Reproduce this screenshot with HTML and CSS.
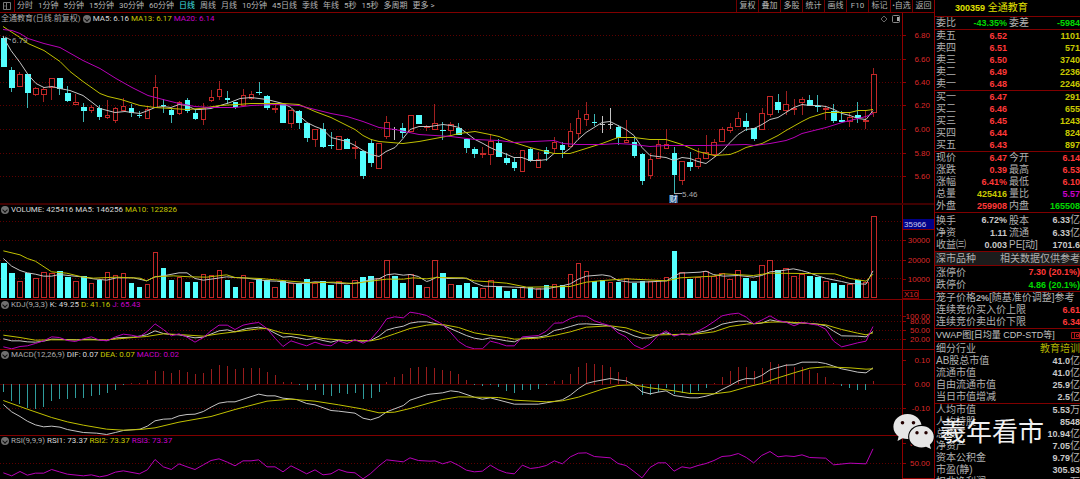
FILE: index.html
```html
<!DOCTYPE html>
<html lang="zh-CN">
<head>
<meta charset="utf-8">
<title>全通教育 300359</title>
<link rel="stylesheet" href="styles.css">
</head>
<body>
<div class="app">
  <main class="charts">
    <nav class="toolbar">
      <button class="layout-btn" aria-label="布局"><svg width="8" height="8" viewBox="0 0 8 8"><path d="M.5.5h7v7h-7zM3.5.5v7" fill="none" stroke="#777"/><path d="M1.500 4h1" stroke="#999"/></svg></button>
      <div class="periods">
        <button>分时</button><button>1分钟</button><button>5分钟</button><button>15分钟</button><button>30分钟</button><button>60分钟</button><button class="active">日线</button><button>周线</button><button>月线</button><button>10分钟</button><button>45日线</button><button>季线</button><button>年线</button><button>5秒</button><button>15秒</button><button>多周期</button><button>更多 &gt;</button>
      </div>
      <div class="tools">
        <button>复权</button><button>叠加</button><button>多股</button><button>统计</button><button>画线</button><button>F10</button><button>标记</button><button>•自选</button><button>返回</button>
      </div>
    </nav>

    <section class="panel price">
      <svg class="plot" data-panel="price"></svg>
      <div class="legend">
        <span class="muted">全通教育(日线.前复权)</span><i class="dot"></i>
        <span class="white">MA5: 6.16</span><span class="yellow">MA13: 6.17</span><span class="magenta">MA20: 6.14</span>
        <span class="corner">
          <svg width="8" height="8" viewBox="0 0 8 8"><path d="M4 1l3 3-3 3-3-3z" fill="none" stroke="#666"/></svg>
          <svg width="8" height="8" viewBox="0 0 8 8"><rect x=".5" y=".5" width="7" height="7" rx="1" fill="none" stroke="#888"/><path d="M5 2h2v4H5z" fill="#aaa"/></svg>
        </span>
      </div>
    </section>
    <section class="panel volume">
      <svg class="plot" data-panel="volume"></svg>
      <div class="legend"><i class="dot"></i><span class="white">VOLUME: 425416</span><span class="white">MA5: 146256</span><span class="yellow">MA10: 122826</span></div>
    </section>
    <section class="panel kdj">
      <svg class="plot" data-panel="kdj"></svg>
      <div class="legend"><i class="dot"></i><span class="muted">KDJ(9,3,3)</span><span class="white">K: 49.25</span><span class="yellow">D: 41.16</span><span class="magenta">J: 65.43</span></div>
    </section>
    <section class="panel macd">
      <svg class="plot" data-panel="macd"></svg>
      <div class="legend"><i class="dot"></i><span class="muted">MACD(12,26,9)</span><span class="white">DIF: 0.07</span><span class="yellow">DEA: 0.07</span><span class="magenta">MACD: 0.02</span></div>
    </section>
    <section class="panel rsi">
      <svg class="plot" data-panel="rsi"></svg>
      <div class="legend"><i class="dot"></i><span class="muted">RSI(9,9,9)</span><span class="white">RSI1: 73.37</span><span class="yellow">RSI2: 73.37</span><span class="magenta">RSI3: 73.37</span></div>
    </section>
  </main>

  <aside class="quote">
    <h1><b>300359</b> 全通教育</h1>
    <table class="four">
      <tr><th>委比</th><td class="green">-43.35%</td><th>委差</th><td class="green">-5984</td></tr>
    </table>
    <table class="book">
      <tr><th>卖五</th><td class="red">6.52</td><td class="yellow">1101</td></tr>
      <tr><th>卖四</th><td class="red">6.51</td><td class="yellow">571</td></tr>
      <tr><th>卖三</th><td class="red">6.50</td><td class="yellow">3740</td></tr>
      <tr><th>卖二</th><td class="red">6.49</td><td class="yellow">2236</td></tr>
      <tr><th>卖一</th><td class="red">6.48</td><td class="yellow">2246</td></tr>
    </table>
    <table class="book">
      <tr><th>买一</th><td class="red">6.47</td><td class="yellow">291</td></tr>
      <tr><th>买二</th><td class="red">6.46</td><td class="yellow">655</td></tr>
      <tr><th>买三</th><td class="red">6.45</td><td class="yellow">1243</td></tr>
      <tr><th>买四</th><td class="red">6.44</td><td class="yellow">824</td></tr>
      <tr><th>买五</th><td class="red">6.43</td><td class="yellow">897</td></tr>
    </table>
    <table class="four">
      <tr><th>现价</th><td class="red">6.47</td><th>今开</th><td class="red">6.14</td></tr>
      <tr><th>涨跌</th><td class="red">0.39</td><th>最高</th><td class="red">6.53</td></tr>
      <tr><th>涨幅</th><td class="red">6.41%</td><th>最低</th><td class="red">6.10</td></tr>
      <tr><th>总量</th><td class="yellow">425416</td><th>量比</th><td class="magenta">5.57</td></tr>
      <tr><th>外盘</th><td class="red">259908</td><th>内盘</th><td class="green">165508</td></tr>
    </table>
    <table class="four roomy">
      <tr><th>换手</th><td>6.72%</td><th>股本</th><td>6.33<i>亿</i></td></tr>
      <tr><th>净资</th><td>1.11</td><th>流通</th><td>6.33<i>亿</i></td></tr>
      <tr><th>收益㈢</th><td>0.003</td><th>PE[动]</th><td>1701.6</td></tr>
    </table>
    <div class="strip shaded"><span>深市品种</span><span>相关数据仅供参考</span></div>
    <table class="two limits roomy">
      <tr><th>涨停价</th><td class="red">7.30 (20.1%)</td></tr>
      <tr><th>跌停价</th><td class="green">4.86 (20.1%)</td></tr>
    </table>
    <table class="two">
      <tr><th colspan="2">笼子价格<b>2%</b>[随基准价调整]参考</th></tr>
      <tr><th>连续竞价买入价上限</th><td class="red">6.61</td></tr>
      <tr><th>连续竞价卖出价下限</th><td class="red">6.34</td></tr>
    </table>
    <div class="strip"><span class="vwap">VWAP图[日均量 CDP-STD等]</span><svg width="9" height="8" viewBox="0 0 9 8"><path d="M.5 1.5h8v6h-8zM3.5 1.5v6M5.5 3.5h2v2h-2z" fill="none" stroke="#b01818"/></svg></div>
    <table class="two roomy">
      <tr><th>细分行业</th><td class="industry">教育培训</td></tr>
      <tr><th>AB股总市值</th><td>41.0<i>亿</i></td></tr>
      <tr><th>流通市值</th><td>41.0<i>亿</i></td></tr>
      <tr><th>自由流通市值</th><td>25.9<i>亿</i></td></tr>
      <tr><th>当日市值增减</th><td>2.5<i>亿</i></td></tr>
    </table>
    <table class="two last">
      <tr><th>人均市值</th><td>5.53<i>万</i></td></tr>
      <tr><th>人均持股</th><td>8548</td></tr>
      <tr><th>总资产</th><td>10.94<i>亿</i></td></tr>
      <tr><th>净资产</th><td>7.05<i>亿</i></td></tr>
      <tr><th>资本公积金</th><td>9.79<i>亿</i></td></tr>
      <tr><th>市盈(静)</th><td>305.93</td></tr>
      <tr><th>扣非净利润</th><td>174.5<i>万</i></td></tr>
    </table>
  </aside>

  <div class="watermark">
    <svg width="42" height="36" viewBox="0 0 42 36">
      <path d="M14.500 0C6.500 0 .4 5.600.4 12.800c0 4 2 7.400 5.200 9.800L4.500 27l5-2.700c1.600.5 3.300.8 5 .8 8 0 14.200-5.500 14.200-12.300S22.500 0 14.500 0z" fill="#e6e6e6"/>
      <ellipse cx="28.500" cy="22.800" rx="13.400" ry="12" fill="#000"/>
      <path d="M28.500 12c-7 0-12.300 4.800-12.300 10.800S21.500 33.500 28.500 33.500c1.600 0 3.100-.3 4.500-.8l5 2.300-1.200-4.300c2.500-2 4-4.800 4-8C40.800 16.800 35.500 12 28.500 12z" fill="#e6e6e6"/>
      <circle cx="9.500" cy="8.800" r="1.800" fill="#200"/><circle cx="20.500" cy="8.800" r="1.800" fill="#200"/>
      <circle cx="24" cy="18.800" r="1.700" fill="#200"/><circle cx="33" cy="18.800" r="1.700" fill="#200"/>
    </svg>
    <span>羲年看市</span>
  </div>
</div>
<script src="chart.js"></script>
</body>
</html>
```

FILE: styles.css
```css
* { box-sizing: border-box; }
body {
  margin: 0;
  background: #000;
  color: #c8c8c8;
  font: 8px/10px "Liberation Sans", "Noto Sans CJK SC", sans-serif;
  overflow: hidden;
}
button {
  margin: 0;
  padding: 0;
  border: 0;
  background: none;
  color: #b4b4b4;
  font: inherit;
  white-space: nowrap;
}
.red { color: #ff3838; }
.green { color: #00d800; }
.yellow { color: #c8c800; }
.magenta { color: #c800c8; }
.white { color: #d8d8d8; }
.muted { color: #acacac; }

.app { position: relative; display: flex; height: 100vh; }
.charts {
  flex: 1;
  min-width: 0;
  display: grid;
  grid-template-rows: 13px minmax(0, 192fr) minmax(0, 95fr) minmax(0, 50fr) minmax(0, 86fr) minmax(0, 43fr);
}

.toolbar { display: flex; align-items: stretch; border-bottom: 1px solid #800000; font-family: Roboto, "Noto Sans CJK SC", sans-serif; }
.layout-btn { display: flex; align-items: center; width: 15px; padding-left: 3px; border-right: 1px solid #800000; }
.periods { display: flex; gap: 5px; padding-left: 2px; }
.periods .active { color: #40e0e0; }
.tools { display: flex; margin-left: auto; }
.tools button { min-width: 22px; padding: 0 1px; border-left: 1px solid #700000; text-align: center; }

.panel { display: grid; grid-template: minmax(0, 1fr) / minmax(0, 1fr); border-bottom: 1px solid #800000; }
.panel.price { border-bottom: 2px solid #400000; }
.panel.rsi { border-bottom: 0; }
.panel > * { grid-area: 1 / 1; }
.plot { display: block; width: 100%; height: 100%; min-height: 0; }
.plot text { font: 8px "Liberation Sans", "Noto Sans CJK SC", sans-serif; }
.legend { align-self: start; display: flex; align-items: center; gap: 2px; padding: 0 34px 0 1px; font-family: Roboto, "Noto Sans CJK SC", sans-serif; white-space: nowrap; }
.price .legend { padding-top: 1px; }
.corner { display: flex; gap: 4px; margin-left: auto; }
.dot { width: 8px; height: 8px; border-radius: 50%; background: #707070; display: grid; place-items: center; }
.dot::after { content: ""; width: 3px; height: 3px; border: solid #111; border-width: 0 1px 1px 0; transform: rotate(45deg); }

.quote { flex: 0 0 146px; border-left: 1px solid #900000; overflow: hidden; font-size: 10px; line-height: 12px; }
.quote h1 { margin: 0; height: 16px; line-height: 16px; padding-left: 20px; color: #e0e000; font-size: 10px; font-weight: 400; }
.quote h1 b { font-size: 9px; }
.quote table { width: 100%; border-collapse: collapse; table-layout: fixed; border-top: 1px solid #800000; }
.quote tr { height: 12px; }
.quote th, .quote td { padding: 0; height: 12px; line-height: 12px; white-space: nowrap; }
.quote th { padding-left: 1px; text-align: left; font-weight: 400; color: #b0b0b0; }
.quote th b { font-size: 9px; }
.quote td { text-align: right; font-size: 9px; font-weight: 700; }
.quote td i { font-size: 10px; font-style: normal; font-weight: 400; color: #b0b0b0; }
.quote td.industry { font-size: 10px; font-weight: 400; color: #b0b000; }
.quote .four th { width: 30px; }
.quote .four th:nth-child(3) { padding-left: 2px; }
.quote .four td:nth-child(2) { width: 42px; }
.quote .book th { width: 30px; }
.quote .book td:nth-child(2) { width: 42px; }
.quote .two th { width: 96px; }
.quote .limits th { width: 60px; }
.quote .roomy tr:first-child > * { height: 13px; line-height: 13px; }
.strip { display: flex; justify-content: space-between; align-items: center; height: 13px; padding-left: 1px; border-top: 1px solid #800000; color: #b0b0b0; white-space: nowrap; }
.strip.shaded { height: 14px; background: #1c1c1c; }
.vwap { font-size: 9px; color: #c4c4c4; }

.watermark { position: absolute; right: 36px; bottom: 29px; display: flex; align-items: center; gap: 5px; color: #f0f0f0; font-size: 26px; line-height: 36px; }
```

FILE: chart.js
```js
// Candles: kind, high, top, bottom, low. r = up, c = down, w/x = flat on down/up volume.
const CANDLES = `c 36 38 67 67|c 67 70 88 92|r 72 74 87 87|c 74 74 93 108|r 87 88 95 96|r 87 89 95 102|r 78 78 88 100|c 78 78 89 95|c 86 93 101 102|r 94 102 105 105
c 103 107 111 122|r 105 107 111 113|c 105 108 117 120|r 100 115 118 119|r 107 108 121 123|r 98 106 111 111|c 104 108 113 117|c 111 115 116 118|r 107 109 119 119|r 75 87 108 108
c 99 105 106 113|c 109 110 115 123|r 101 102 114 115|c 98 100 111 113|c 110 113 119 120|r 103 108 120 125|r 90 97 101 102|r 81 89 97 100|c 91 98 100 104|c 102 102 107 109
r 89 95 106 106|r 91 94 99 100|c 82 92 93 95|c 95 96 108 110|r 105 108 110 113|c 103 104 123 123|r 109 110 124 128|c 110 111 123 129|c 123 123 138 142|r 129 129 140 147
c 123 129 147 148|c 132 145 146 149|r 136 136 150 150|c 138 139 149 149|r 141 147 149 159|c 151 151 176 179|c 139 143 163 167|r 143 143 169 169|r 116 122 137 139|w 127 129 129 140
c 123 128 133 138|r 115 115 132 132|c 115 115 124 124|r 125 126 128 131|r 104 123 130 130|c 122 130 131 140|r 122 124 131 135|c 123 128 135 135|c 139 139 148 153|c 147 149 154 158
r 147 153 155 158|r 134 141 155 165|c 139 143 157 157|c 153 158 163 165|c 158 162 168 171|r 150 150 172 172|c 148 149 161 162|r 152 159 168 168|c 147 150 154 161|r 137 142 149 153
c 142 145 150 158|r 123 131 147 147|r 110 118 134 140|r 102 114 120 126|c 114 122 123 126|w 116 124 124 133|x 108 124 124 129|c 125 127 138 145|r 120 140 143 143|c 136 142 156 158
c 153 154 181 185|r 153 159 176 179|r 140 144 159 159|r 129 144 149 149|c 147 153 175 193|r 161 161 181 185|c 152 162 167 171|r 148 158 167 169|r 135 152 159 159|r 139 142 155 157
r 127 129 142 142|r 123 127 131 133|r 112 118 127 127|c 113 121 127 131|c 128 128 139 141|r 108 113 130 130|r 96 96 115 117|c 94 102 110 113|r 91 104 111 115|r 99 108 110 115
r 97 99 103 115|c 95 100 106 106|c 95 106 107 112|r 106 108 110 120|c 104 111 121 123|c 111 120 122 122|r 112 117 122 127|c 102 115 118 123|r 111 120 122 129|r 68 74 113 117`
  .split(/[|\n]/).map(s => { const p = s.trim().split(' '); return [p[0], ...p.slice(1).map(Number)]; });

// Bar tops and indicator lines, stored at three units per base pixel, y counted from 200px down.
const VOLUME = [190,219,244,220,235,217,220,214,231,244,228,250,240,217,225,220,249,262,252,157,205,239,232,247,247,223,226,209,239,260,226,247,237,239,260,244,250,249,237,250,243,256,244,256,241,232,228,234,179,229,249,223,255,262,181,220,253,255,250,262,265,241,258,273,267,262,262,265,254,253,256,223,190,214,243,239,247,245,235,249,243,244,240,232,153,217,237,232,214,229,218,238,209,234,243,196,181,210,205,229,223,229,232,244,249,255,253,240,247,48];
const HIST = [577,605,612,626,627,622,605,599,599,595,594,590,587,581,570,555,550,550,541,514,514,519,511,516,522,519,507,496,498,507,504,504,504,517,526,546,547,553,570,572,585,590,581,584,581,599,596,576,547,530,522,504,502,501,504,511,514,523,541,555,560,557,563,573,580,570,570,567,557,544,541,523,501,489,491,494,501,517,532,553,585,587,576,566,583,580,582,575,564,549,530,514,502,502,514,504,487,492,493,502,502,510,519,532,549,559,566,570,572,544];

const WHITE = '#c4c4c4', YELLOW = '#c0c000', MAGENTA = '#b800b8', CYAN = '#54ffff', RED = '#c42828', LABEL = '#dc2828';

const pairs = s => s.trim().split(/\s+/).map(p => p.split(',').map(Number));
// Two halves of a series; the second half starts at unit 1290.
const halves = (a, b) => [...pairs(a), ...pairs(b).map(([x, y]) => [x + 1290, y])].map(([x, y]) => [x / 3, y / 3 + 200]);

const PANELS = {
  price: {
    top: 13, height: 190,
    grid: [35, 59, 82, 105, 129, 153, 176],
    labels: [[35, '6.80'], [59, '6.60'], [82, '6.40'], [105, '6.20'], [129, '6.00'], [153, '5.80'], [176, '5.60']],
    lines: [
      [WHITE, pairs('3,36 11,50 20,62 28,74 36,83 44,87 52,86 60,88 70,90 83,95 91,101 100,108 115,112 125,111 132,112 140,113 148,110 155,107 163,106 171,107 179,104 187,105 195,109 200,109 211,108 217,106 230,102 240,98 251,97 267,99 275,101 283,103 291,107 299,115 307,122 315,126 323,129 331,137 339,139 347,141 355,145 363,150 371,154 379,156 386,151 395,147 403,138 410,129 419,126 430,126 443,124 451,125 459,127 466,132 475,139 483,143 490,147 499,151 507,154 514,157 522,157 530,160 539,160 547,159 554,153 563,153 570,148 578,139 586,132 594,127 602,122 610,121 618,125 626,129 634,135 642,147 650,155 658,156 666,157 674,160 682,157 690,158 698,161 706,163 714,157 722,151 730,142 738,134 746,129 754,128 762,124 770,119 778,117 786,112 794,107 802,104 810,105 818,105 826,106 834,109 842,113 850,115 858,118 866,119 873,110')],
      [YELLOW, pairs('3,26 20,37 28,43 44,50 60,61 70,71 83,81 100,93 108,96 121,99 140,105 155,107 171,108 187,109 200,108 220,105 237,104 251,103 283,103 299,104 315,111 331,117 347,125 355,129 363,135 371,139 379,141 403,143 419,141 435,138 451,135 459,133 475,131 490,134 499,136 514,142 530,147 554,153 570,153 586,148 602,143 618,137 634,137 650,139 666,139 682,144 698,151 714,155 730,154 738,151 746,147 762,143 778,135 786,130 802,121 810,117 826,112 850,112 858,110 866,110 873,109')],
      [MAGENTA, pairs('3,29 12,30 20,33 28,38 44,43 60,47 83,60 100,68 116,78 132,87 148,95 163,99 179,103 195,106 211,107 235,107 251,105 275,104 299,105 315,109 331,113 347,116 363,121 379,127 395,129 419,134 435,135 451,136 475,139 499,140 514,142 554,140 563,143 578,144 602,144 618,143 634,144 650,146 666,145 706,145 746,144 754,145 770,143 786,140 794,137 802,133 818,129 826,127 842,122 850,120 858,118 866,116 873,113')]
    ]
  },
  volume: {
    top: 205, height: 94,
    grid: [221, 240, 260, 278],
    labels: [[240, '30000'], [260, '20000'], [279, '10000']],
    lines: [
      [WHITE, halves('10,174 35,197 60,210 82,217 106,221 131,227 155,227 178,222 215,226 245,229 280,235 320,239 350,232 400,232 440,241 465,229 490,226 537,217 561,217 585,234 610,239 640,235 680,229 705,231 740,233 800,241 830,242 870,247 900,250 945,244 969,245 1040,250 1085,246 1112,236 1137,235 1160,223 1184,220 1210,224 1230,222 1255,228 1280,243', '0,240 20,230 50,234 110,233 133,247 160,257 200,258 253,260 290,262 320,266 350,265 400,255 421,250 445,236 469,227 517,223 541,227 564,240 600,245 660,244 710,241 732,227 750,218 810,215 828,212 850,222 880,227 925,225 970,230 995,225 1020,214 1044,212 1090,205 1114,210 1139,217 1163,226 1190,234 1235,243 1260,249 1308,251 1329,211')],
      [YELLOW, halves('10,151 60,163 82,174 106,182 155,214 200,218 245,229 280,233 350,230 420,233 440,241 465,229 520,226 570,229 620,230 680,223 705,231 780,234 870,242 930,247 1000,245 1060,249 1112,242 1160,236 1210,236 1240,232 1280,235', '20,231 100,232 133,241 180,244 230,248 290,260 420,258 469,245 520,240 590,235 710,241 750,232 850,227 880,220 970,225 1020,218 1214,220 1260,234 1308,242 1329,221')]
    ]
  },
  kdj: {
    top: 300, height: 49,
    grid: [315, 321, 330, 339],
    labels: [[316, '100.00'], [321, '80.00'], [330, '50.00'], [339, '20.00']],
    lines: [
      [WHITE, halves('10,415 35,421 60,421 82,424 106,425 131,422 155,416 230,418 270,416 320,420 350,412 400,410 440,403 465,391 490,399 514,402 537,403 585,412 610,410 657,391 682,388 705,394 740,384 776,380 801,385 825,398 849,410 873,408 920,417 945,414 969,420 993,425 1016,419 1040,421 1065,419 1085,422 1112,420 1137,407 1160,389 1184,382 1210,377 1230,368 1255,364 1280,364', '0,366 38,374 86,395 109,405 133,413 157,417 181,412 229,421 253,424 277,413 325,410 349,405 373,390 397,385 421,378 445,371 469,370 517,373 541,377 564,388 588,395 612,406 636,413 660,412 684,403 708,397 732,404 756,401 780,403 804,396 828,391 852,383 876,371 900,366 925,362 949,362 971,370 995,368 1020,358 1044,363 1068,365 1092,368 1116,367 1163,371 1187,376 1211,392 1235,406 1283,407 1308,409 1329,393')],
      [YELLOW, halves('10,404 60,411 106,419 155,418 230,418 320,418 400,411 440,408 465,404 490,400 537,402 610,407 657,400 705,394 776,385 801,384 849,398 900,403 969,414 1040,420 1112,421 1137,416 1184,400 1230,384 1280,374', '0,373 38,372 86,381 133,397 181,405 229,411 253,416 325,413 373,405 421,394 469,380 541,376 588,382 636,398 660,404 804,400 852,394 900,378 949,371 1020,365 1068,364 1187,373 1235,387 1283,398 1308,403 1329,397')],
      [MAGENTA, halves('10,439 35,445 60,438 82,436 106,429 131,421 155,409 178,411 202,420 226,423 250,415 274,409 299,419 321,421 346,409 370,401 394,404 418,409 442,393 465,370 490,387 514,406 537,400 561,410 585,425 610,411 633,391 657,374 682,374 705,387 729,374 753,369 776,366 801,384 825,413 849,438 873,421 897,429 920,436 945,425 969,433 993,436 1016,421 1041,429 1065,418 1089,428 1112,417 1137,388 1160,355 1184,349 1210,352 1230,335 1255,339 1280,345', '0,351 38,372 62,396 86,423 109,438 133,445 157,445 181,422 205,428 229,436 253,436 277,409 325,405 349,392 373,368 397,367 421,354 445,346 469,347 493,361 517,369 541,376 564,397 588,409 612,434 636,445 660,431 684,405 708,391 732,407 756,400 780,403 804,392 828,379 852,363 876,346 900,341 925,338 949,350 971,370 995,359 1020,346 1044,360 1068,365 1092,376 1116,366 1163,374 1187,386 1211,422 1235,439 1260,433 1283,427 1308,422 1329,378')]
    ]
  },
  macd: {
    top: 350, height: 85,
    grid: [384, 408],
    labels: [[360, '0.10'], [384, '0.00'], [408, '-0.10']],
    lines: [
      [WHITE, halves('10,612 35,634 60,648 82,662 106,673 131,679 155,677 180,680 202,687 250,696 290,698 320,702 346,696 370,690 420,686 442,677 465,661 490,656 514,655 537,646 561,642 585,641 610,633 633,620 657,608 682,604 705,604 776,581 801,586 825,586 849,593 890,597 920,609 945,613 993,630 1016,632 1065,638 1089,653 1112,658 1137,650 1160,634 1210,615 1230,599 1280,583', '0,581 38,577 62,571 86,574 133,590 157,596 181,592 253,611 325,611 373,603 397,598 421,584 445,565 469,549 493,543 541,534 564,538 588,541 612,553 636,574 660,580 684,575 708,571 732,585 780,592 804,592 828,587 852,580 876,567 900,555 925,541 949,534 971,535 995,525 1020,508 1068,494 1092,493 1116,485 1163,485 1187,489 1211,497 1235,505 1260,510 1283,515 1308,517 1329,502')],
      [YELLOW, halves('10,600 82,626 155,651 202,664 250,674 320,686 370,689 420,687 465,682 537,665 633,648 705,627 801,602 873,596 945,602 1016,613 1085,625 1137,637 1184,635 1230,624', '0,607 38,597 86,589 133,590 205,591 253,599 349,604 397,601 445,590 517,566 564,555 612,553 660,562 732,571 780,579 852,580 900,574 949,560 995,549 1044,532 1092,517 1139,503 1187,499 1260,502 1308,506 1329,505')]
    ]
  },
  rsi: {
    top: 436, height: 43,
    grid: [463],
    labels: [[443, '80.00'], [463, '50.00']],
    lines: [
      [MAGENTA, halves('10,817 35,826 60,813 82,824 106,818 131,818 155,807 178,814 202,821 250,826 274,823 299,829 321,825 346,815 370,811 418,820 442,808 465,777 490,799 514,807 537,790 561,799 585,807 610,793 633,780 657,775 682,785 705,796 729,781 753,781 776,778 801,799 825,799 849,814 873,796 897,808 920,820 945,808 969,823 993,820 1016,807 1041,815 1065,817 1089,835 1112,819 1137,796 1160,778 1210,784 1230,772 1255,780', '0,782 15,781 38,790 62,783 86,795 109,809 133,814 157,812 181,794 205,808 229,817 253,820 277,794 301,804 325,801 349,795 373,781 397,790 421,769 445,758 469,757 493,768 541,772 564,789 588,795 612,813 636,832 660,801 684,787 708,787 732,812 756,799 780,803 804,795 828,789 852,780 876,768 900,766 925,759 949,771 971,787 995,765 1020,753 1044,769 1068,766 1092,768 1116,763 1139,771 1187,773 1211,793 1260,788 1308,790 1329,745')]
    ]
  }
};

const AXIS_WIDTH = 32;
const BASE_PLOT = 902;

function draw(svg) {
  const name = svg.dataset.panel, panel = PANELS[name];
  const width = svg.clientWidth, height = svg.clientHeight;
  const axis = width - AXIS_WIDTH;
  const sx = axis / BASE_PLOT;
  const X = x => x * sx;
  const Y = y => (y - panel.top) * height / panel.height;
  const center = i => X(3.9 + i * 7.981);
  let out = '';
  const rect = (x, y, w, h, fill) => { out += `<rect x="${x}" y="${y}" width="${w}" height="${h}" fill="${fill}" shape-rendering="crispEdges"/>`; };
  const box = (x, y, w, h, stroke) => { out += `<rect x="${x + .5}" y="${y + .5}" width="${w - 1}" height="${h - 1}" fill="#000" stroke="${stroke}"/>`; };
  const text = (x, y, s, fill, anchor) => { out += `<text x="${x}" y="${y}" fill="${fill}" text-anchor="${anchor}">${s}</text>`; };

  for (const g of panel.grid) {
    const y = Math.round(Y(g)) + .5;
    out += `<path d="M0 ${y}H${axis}" stroke="#5c0000" stroke-dasharray="1 2"/>`;
  }
  rect(axis, 0, 1, height, '#900000');
  for (const [y, s] of panel.labels) {
    rect(axis, Math.round(Y(y)), 4, 1, '#900000');
    text(width - 4, Math.round(Y(y)) + 3, s, LABEL, 'end');
  }

  const bar = (i, top, bottom, filled) => {
    const l = Math.round(center(i) - 2.8), w = Math.round(center(i) + 2.8) - l;
    const t = Math.round(Y(top)), h = Math.max(1, Math.round(Y(bottom)) - t);
    if (filled) rect(l, t, w, h, CYAN);
    else if (h < 3) rect(l, t, w, h, RED);
    else box(l, t, w, h, RED);
  };

  if (name === 'price') {
    CANDLES.forEach(([kind, high, top, bottom, low], i) => {
      const flat = kind === 'w' || kind === 'x';
      const x = Math.floor(center(i));
      rect(x, Math.round(Y(high)), 1, Math.round(Y(low) - Y(high)), flat ? WHITE : kind === 'c' ? '#3cb4b4' : '#a02020');
      if (flat) rect(x - 2, Math.round(Y(top)), 5, 1, WHITE);
      else bar(i, top, bottom, kind === 'c');
    });
    out += `<path d="M5 ${Y(37)}l6 3M${X(674)} ${Y(193.5)}h8" stroke="#aaa" fill="none"/>`;
    text(X(12), Y(43), '6.79', '#aaa', 'start');
    text(X(682), Y(197), '5.46', '#aaa', 'start');
    const tag = Math.round(X(669));
    rect(tag, Math.round(Y(195)), 9, 8, '#164c84');
    text(tag + 4.5, Math.round(Y(202)), '财', '#ffffff', 'middle');
  }
  if (name === 'volume') {
    VOLUME.forEach((v, i) => bar(i, v / 3 + 200, 298, 'cw'.includes(CANDLES[i][0])));
    rect(axis + 1, Math.round(Y(219)), AXIS_WIDTH - 1, 10, '#000088');
    rect(axis + 1, Math.round(Y(229)), AXIS_WIDTH - 1, 1, '#800000');
    text(axis + 2, Math.round(Y(227)), '35966', '#c8c8e8', 'start');
    box(axis, Math.round(Y(290)), 17, 9, '#800000');
    text(axis + 2, Math.round(Y(297)), 'X10', LABEL, 'start');
  }
  if (name === 'macd') {
    rect(0, Math.round(Y(384)), axis, 1, '#4c0000');
    HIST.forEach((v, i) => {
      const y = Y(v / 3 + 200), zero = Y(384.3);
      rect(Math.floor(center(i)), Math.round(Math.min(y, zero)), 1, Math.max(1, Math.round(Math.abs(y - zero))), y > zero ? '#2f9c9c' : '#981c1c');
    });
  }
  if (name === 'rsi') rect(axis, height - 1, AXIS_WIDTH, 1, '#900000');

  for (const [color, points] of panel.lines)
    out += `<polyline points="${points.map(([x, y]) => X(x) + ',' + Y(y + .5)).join(' ')}" fill="none" stroke="${color}"/>`;
  svg.innerHTML = out;
}

const drawAll = () => document.querySelectorAll('.plot').forEach(draw);
addEventListener('resize', drawAll);
drawAll();
```
